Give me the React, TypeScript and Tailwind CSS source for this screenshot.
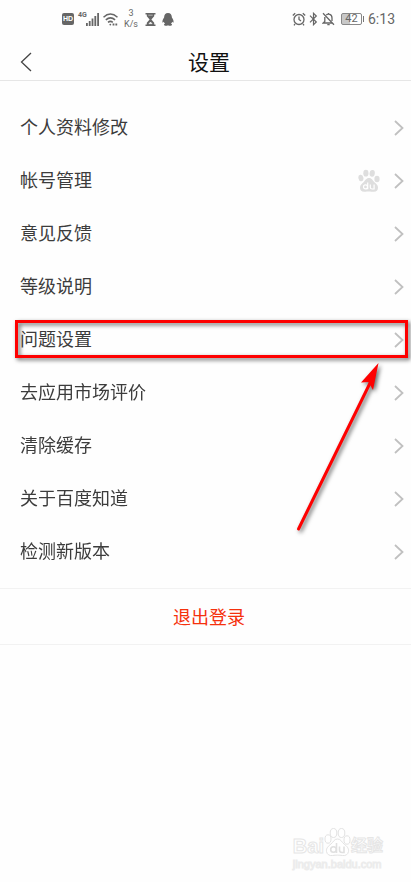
interface SettingItem {
  label: string;
  badge?: boolean;
  marked?: boolean;
}

const items: SettingItem[] = [
  { label: "个人资料修改" },
  { label: "帐号管理", badge: true },
  { label: "意见反馈" },
  { label: "等级说明" },
  { label: "问题设置", marked: true },
  { label: "去应用市场评价" },
  { label: "清除缓存" },
  { label: "关于百度知道" },
  { label: "检测新版本" },
];

function StatusBar() {
  return (
    <div className="flex h-10 items-center justify-between pr-4 pb-[2px] pl-[62px] text-[#666]">
      <div className="flex items-center">
        <span className="flex h-3 w-3 items-center justify-center rounded-xs bg-[#666] text-[7px] font-bold text-white">
          HD
        </span>
        <span className="mb-2 ml-1 w-2 font-[Roboto] text-[7px] leading-[6px] font-bold">4G</span>
        <svg className="h-[13px] w-[13px]" viewBox="0 0 13 13" fill="currentColor" aria-hidden="true">
          <rect x="0" y="10" width="1.8" height="3" />
          <rect x="2.8" y="8" width="1.8" height="5" />
          <rect x="5.6" y="5.5" width="1.8" height="7.5" />
          <rect x="8.4" y="3" width="1.8" height="10" />
          <rect x="11.2" y="0" width="1.8" height="13" />
        </svg>
        <svg className="ml-1 h-[13px] w-[15px]" viewBox="0 0 15 13" fill="none" stroke="currentColor" strokeWidth="1.5" aria-hidden="true">
          <path d="M.5 4.2Q7.3-2.3 14.5 4.2M2.8 6.9q4.7-4 9.3 0M5 9.4q2.4-2 4.8 0" />
          <circle cx="7.3" cy="11.6" r=".9" fill="currentColor" stroke="none" />
          <path d="M9.6 11.6h1.8M12.4 11.6h1.8" strokeWidth="2" />
        </svg>
        <span className="ml-[5px] flex w-4 flex-col items-center font-[Roboto] text-[9px] leading-[11px]">
          <span>3</span>
          <span>K/s</span>
        </span>
        <svg className="ml-[6px] h-[13px] w-[11px]" viewBox="0 0 11 13" aria-hidden="true">
          <path d="M.5.7h10M.5 12.3h10" stroke="currentColor" strokeWidth="1.4" />
          <path d="M1.8 1h7.4v2.2L6.4 6.5l2.8 3.3V12H1.8V9.8l2.8-3.3-2.8-3.3z" fill="currentColor" />
          <path d="M3.3 2.2h4.4M5.5 9l-1.6 1.7h3.2z" stroke="#fff" strokeWidth=".5" fill="#fff" />
        </svg>
        <svg className="ml-[6px] h-[13px] w-3" viewBox="0 0 12 13" fill="currentColor" aria-hidden="true">
          <path d="M6 0C3.4 0 2.1 1.9 2.1 4.6.9 6.2.2 7.9.5 9.5c.3.4.9-.1 1.3-.7.2.8.6 1.4 1.2 2-.8.3-1.2.8-1 1.3.3.9 3 .9 4 .2 1 .7 3.7.7 4-.2.2-.5-.2-1-1-1.3.6-.6 1-1.2 1.2-2 .4.6 1 1.1 1.3.7.3-1.6-.4-3.3-1.6-4.9C9.900 1.900 8.600 0 6 0z" />
        </svg>
      </div>
      <div className="flex items-center">
        <svg className="h-[14px] w-[14px]" viewBox="0 0 14 14" fill="none" stroke="currentColor" strokeWidth="1.3" aria-hidden="true">
          <circle cx="7" cy="7.5" r="5" />
          <path d="M7 4.500v3l2 1.500M.8 3.500l2.400-2.300M13.200 3.500l-2.400-2.300M3 12l-1 1.300M11 12l1 1.300" />
        </svg>
        <svg className="ml-[3px] h-[14px] w-[9px]" viewBox="0 0 9 14" fill="none" stroke="currentColor" strokeWidth="1.2" aria-hidden="true">
          <path d="M1 3.700l6.300 6.300-2.800 2.700V1.300L7.300 4 1 10.300" />
        </svg>
        <svg className="ml-1 h-[14px] w-[13px]" viewBox="0 0 13 14" fill="none" stroke="currentColor" strokeWidth="1.3" aria-hidden="true">
          <path d="M1 1.300l11 11.400M2.800 5v4.500L1.200 11h9.300M4.300 2.900C5.800 1.600 10 2 10 6v3M5.300 12.600h2.400M6.500 1v1" />
        </svg>
        <span className="ml-[6px] flex h-3 w-[21px] items-center justify-center rounded-xs border border-[#888] bg-linear-to-r from-[#c8c8c8] from-42% to-white to-42% font-[Roboto] text-[11px] leading-[10px]">
          42
        </span>
        <span className="ml-px h-[6px] w-px bg-[#777]" />
        <span className="ml-[4px] font-[Roboto] text-sm leading-4">6:13</span>
      </div>
    </div>
  );
}

function Chevron() {
  return (
    <svg className="h-4 w-[10px] shrink-0" viewBox="0 0 10 16" fill="none" stroke="#c0c0c0" strokeWidth="1.8" aria-hidden="true">
      <path d="M1 1l7.500 7L1 15" />
    </svg>
  );
}

function PawBadge() {
  return (
    <svg className="mr-[14px] h-6 w-[22px]" viewBox="0 0 22 24" fill="#dedede" aria-hidden="true">
      <ellipse cx="2.900" cy="9" rx="2.500" ry="3.300" transform="rotate(-12 2.9 9)" />
      <ellipse cx="7.900" cy="4.200" rx="2.600" ry="3.400" />
      <ellipse cx="14.200" cy="4.300" rx="2.600" ry="3.400" transform="rotate(8 14.2 4.3)" />
      <ellipse cx="19" cy="10" rx="2.600" ry="3.200" />
      <path d="M11 9c-3 0-3.600 2.500-5.500 4.200-2 1.700-3.500 3-3.500 5.500 0 2.800 2 4.300 4.500 4.100 1.800-.2 3-.4 4.500-.4s2.700.3 4.500.4c2.700.2 4.500-1.300 4.500-4 0-2.600-1.500-3.700-3.500-5.500C14.700 11.600 14 9 11 9z" />
      <g fill="none" stroke="#fff" strokeWidth="1.2">
        <circle cx="7.500" cy="17.900" r="2" />
        <path d="M9.700 13.500v6.800M12.300 15.500v2.700q0 1.800 1.800 1.800h2v-4.500" />
      </g>
    </svg>
  );
}

/* Red frame around the highlighted row, with an arrow pointing up at it */
function Callout() {
  return (
    <div className="pointer-events-none absolute top-[7px] right-[3px] bottom-2 left-[15px] border-3 border-[#fe0000] drop-shadow-[2px_2px_2px_rgba(0,0,0,0.6)]">
      <svg className="absolute top-9 right-4 h-[180px] w-[100px]" viewBox="0 0 100 180" aria-hidden="true">
        <path d="M9.500 170L84 18" stroke="#fe0000" strokeWidth="3" strokeLinecap="round" />
        <path d="M89.500 4L72 23.500l7.500-.5L84 31z" fill="#fe0000" />
      </svg>
    </div>
  );
}

function Watermark() {
  return (
    <div className="flex flex-col text-white">
      <div className="flex h-[31px] items-end">
        <span className="text-xl leading-6 font-bold [-webkit-text-stroke:1px_#e6e6e6]">Bai</span>
        <svg className="h-[31px] w-[27px]" viewBox="0 0 27 31" fill="#fff" stroke="#e3e3e3" strokeWidth="1" aria-hidden="true">
          <ellipse cx="4" cy="12" rx="3" ry="4.200" />
          <ellipse cx="9.500" cy="6" rx="3.300" ry="4.500" />
          <ellipse cx="17.500" cy="6" rx="3.300" ry="4.500" />
          <ellipse cx="23" cy="13" rx="3" ry="4.200" />
          <path d="M13.500 12c-3.500 0-4 3-6.500 5s-5 4-4.500 7.500c.5 3 3 4.500 6 4 3.300-.5 6.700-.5 10 0 3 .5 5.500-1 6-4 .5-3.500-2-5.500-4.500-7.500s-3-5-6.500-5z" />
          <g fill="none" stroke="#e0e0e0" strokeWidth="1.600">
            <circle cx="9.500" cy="22.500" r="2.800" />
            <path d="M12.500 16v10M15.500 19.500V23q0 2.500 2.500 2.500h2v-6" />
          </g>
        </svg>
        <span className="text-base leading-6 font-bold [-webkit-text-stroke:1px_#e6e6e6]">经验</span>
      </div>
      <span className="text-[11px] leading-3 [-webkit-text-stroke:1px_#ececec]">jingyan.baidu.com</span>
    </div>
  );
}

export default function App() {
  return (
    <div className="flex min-h-screen flex-col bg-[#fefefe] font-['Liberation_Sans','Noto_Sans_CJK_SC',sans-serif]">
      <StatusBar />

      <header className="grid h-[41px] grid-cols-[1fr_auto_1fr] items-center border-b border-[#e6e6e6] pr-[13px] pl-5">
        <button type="button" aria-label="返回" className="flex h-10 w-8 items-center pt-1">
          <svg className="h-5 w-3" viewBox="0 0 12 20" fill="none" stroke="#444" strokeWidth="1.300" aria-hidden="true">
            <path d="M11 1L1.500 10 11 19" />
          </svg>
        </button>
        <h1 className="pt-[6px] text-[21px] leading-8 text-[#111]">设置</h1>
      </header>

      <main>
        <ul className="pt-5">
          {items.map((item) => (
            <li key={item.label} className="relative">
              <button
                type="button"
                className="flex h-[53px] w-full items-center pr-[7px] pl-5 text-left text-lg leading-6 text-[#3c3c3c]"
              >
                <span className="flex-1">{item.label}</span>
                {item.badge && <PawBadge />}
                <Chevron />
              </button>
              {item.marked && <Callout />}
            </li>
          ))}
        </ul>

        <button
          type="button"
          className="mt-[10px] flex h-[57px] w-full items-center justify-center border-y border-[#f2f2f2] pt-[2px] pl-[7px] text-lg leading-6 text-[#f5310d]"
        >
          退出登录
        </button>
      </main>

      <footer className="mt-auto flex justify-end pr-7 pb-3">
        <Watermark />
      </footer>
    </div>
  );
}
